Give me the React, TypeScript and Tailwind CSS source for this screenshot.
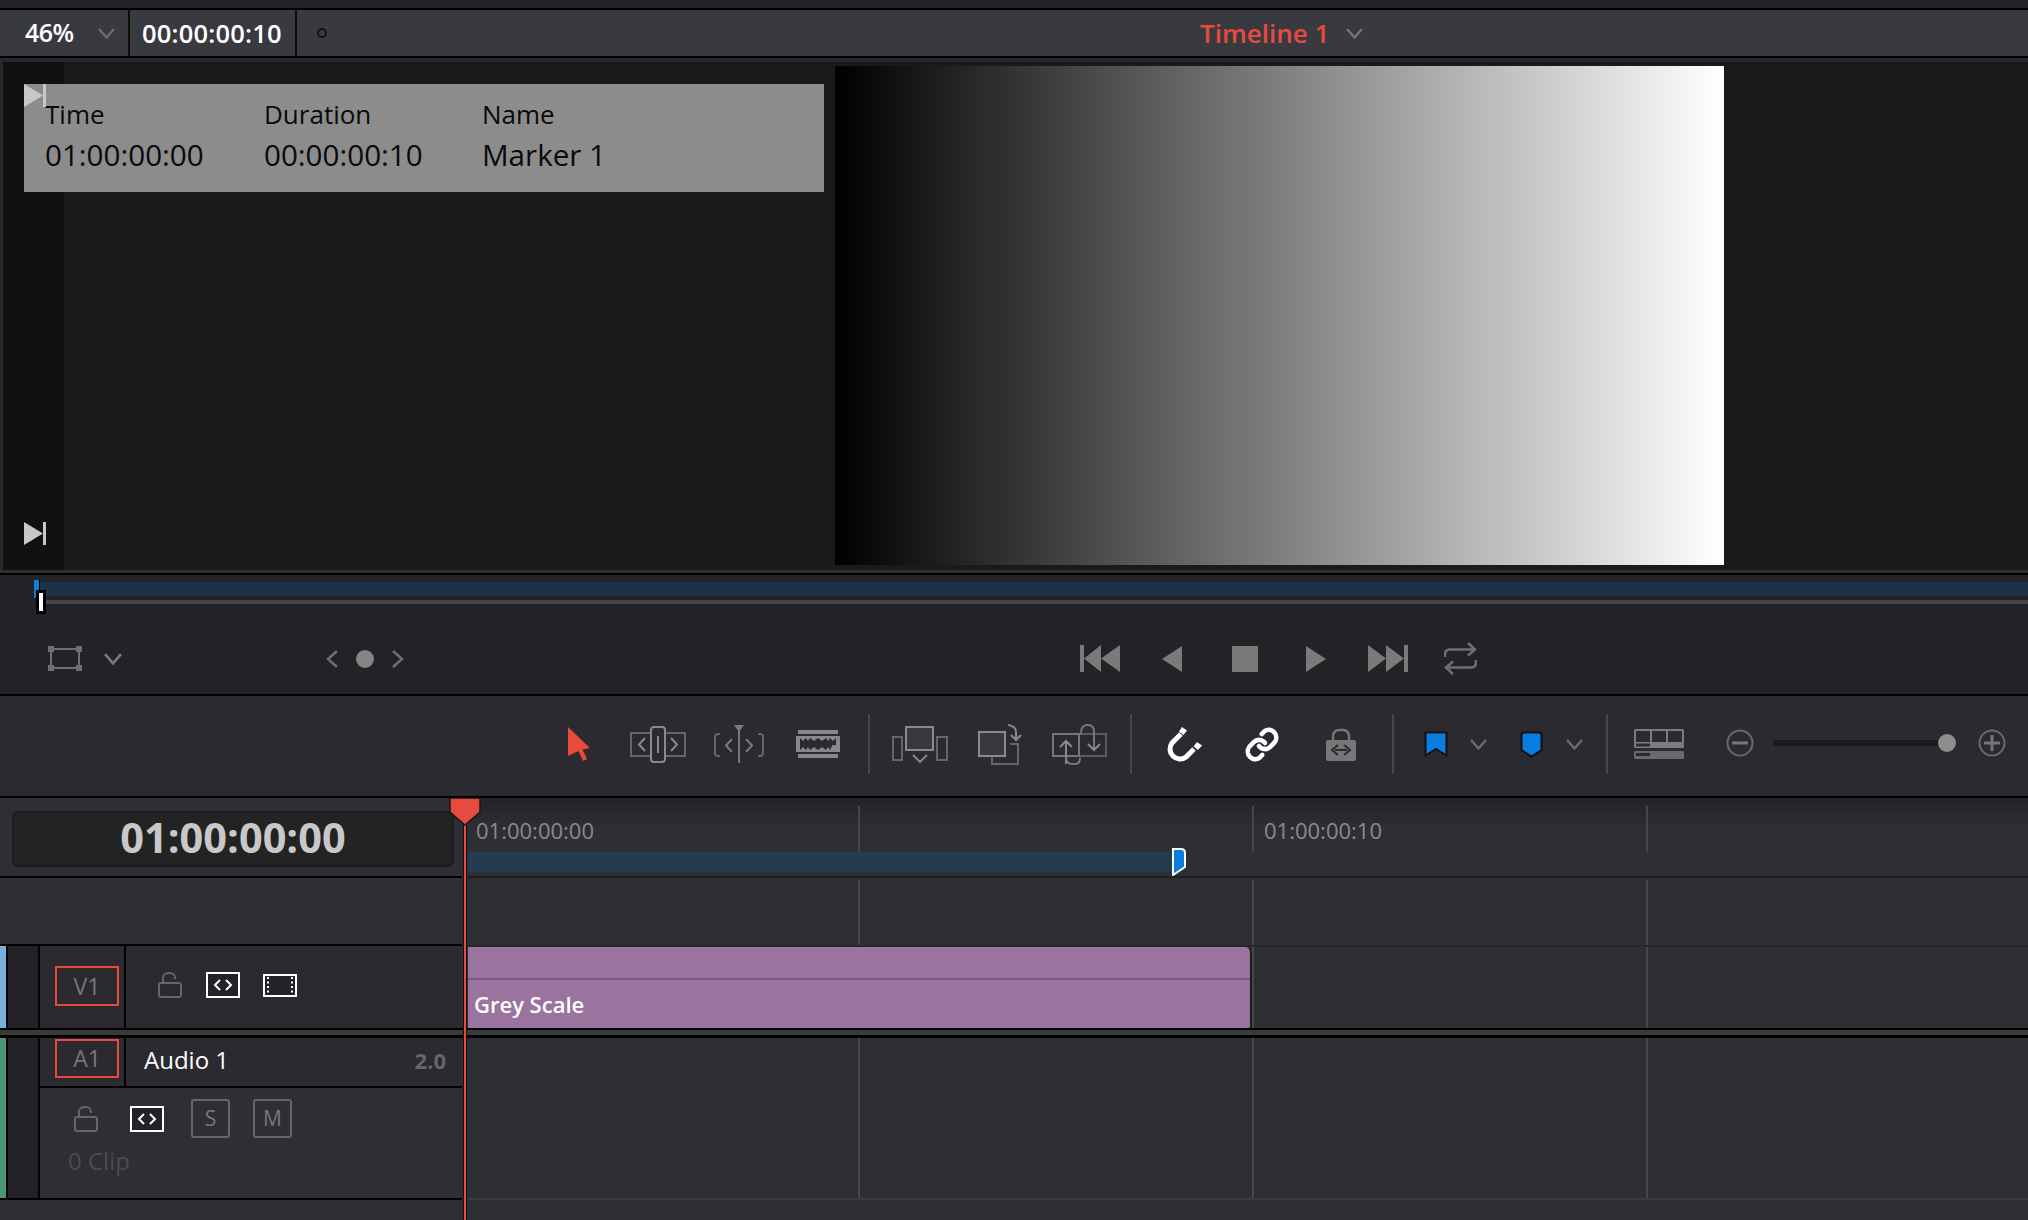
import React from 'react';

const gray = '#7a7a7a';

const Chevron = ({ w = 17, h = 11, c = '#6f6f6f', sw = 2.2 }: { w?: number; h?: number; c?: string; sw?: number }) => (
  <svg width={w} height={h} viewBox="0 0 17 11" fill="none" preserveAspectRatio="none">
    <path d="M1 1l7.5 8.5L16 1" stroke={c} strokeWidth={sw} />
  </svg>
);

const LockOpen = () => (
  <svg width="24" height="26" viewBox="0 0 24 26" fill="none" stroke="#666" strokeWidth="2">
    <rect x="1" y="11" width="22" height="14" rx="2" />
    <path d="M5 11V6a5 5 0 0 1 5-5h2a5 5 0 0 1 5 5v1" />
  </svg>
);

const AutoSelect = () => (
  <div className="w-[34px] h-[26px] border-2 border-white bg-[#232327] flex items-center justify-center">
    <svg width="20" height="12" viewBox="0 0 20 12" fill="none" stroke="#fff" strokeWidth="2">
      <path d="M7 1L2 6l5 5M13 1l5 5-5 5" />
    </svg>
  </div>
);

const Film = () => (
  <svg width="34" height="23" viewBox="0 0 34 23" fill="none">
    <rect x="1" y="1" width="32" height="21" fill="#232327" stroke="#fff" strokeWidth="2" />
    <path d="M5 3v17M29 3v17" stroke="#fff" strokeWidth="2" strokeDasharray="2 2.5" />
  </svg>
);

const TrimIcon = () => (
  <svg width="56" height="37" viewBox="0 0 56 37" fill="none" stroke="#666" strokeWidth="2">
    <path d="M20 7H1v23h19M36 7h19v23H36" />
    <rect x="21" y="1" width="14" height="35" rx="3" stroke="#8a8a8a" />
    <path d="M28 10v17" stroke="#8a8a8a" />
    <path d="M15 12l-6 6.500 6 6.500M41 12l6 6.500-6 6.500" stroke="#8a8a8a" />
  </svg>
);

const DynamicIcon = () => (
  <svg width="50" height="38" viewBox="0 0 50 38" fill="none" stroke="#666" strokeWidth="2">
    <path d="M6 9H4Q1 9 1 12v16q0 3 3 3h2M44 9h2q3 0 3 3v16q0 3-3 3h-2" />
    <path d="M25 6v32" stroke="#7a7a7a" />
    <path d="M20 0h10l-5 7z" fill="#7a7a7a" stroke="none" />
    <path d="M18 14l-6 6.500 6 6.500M32 14l6 6.500-6 6.500" stroke="#7a7a7a" />
  </svg>
);

const RazorIcon = () => (
  <svg width="44" height="28" viewBox="0 0 44 28" fill="none">
    <rect x="2" y="0" width="40" height="4" fill="#888" />
    <rect x="2" y="24" width="40" height="4" fill="#888" />
    <rect x="0" y="6" width="44" height="16" fill="#888" />
    <path d="M4 8l3 3 3-3 2 3 2-3 4 3 4-3 4 3 4-3 2 3 2-3 3 3 3-3v6l-3 0-3 6-2-3-2 3-4-3-4 3-4-3-4 3-2-3-2 3-3-3-3 3z" fill="#2a2a30" />
    <rect x="4" y="12.500" width="36" height="2.500" fill="#2a2a30" />
  </svg>
);

const InsertIcon = () => (
  <svg width="56" height="37" viewBox="0 0 56 37" fill="none" strokeWidth="2">
    <rect x="14" y="1" width="27" height="23" fill="#38383e" stroke="#8a8a8a" />
    <rect x="1" y="11" width="9" height="23" stroke="#666" />
    <rect x="45" y="11" width="10" height="23" stroke="#666" />
    <path d="M21 29l7 7 7-7" stroke="#8a8a8a" />
  </svg>
);

const OverwriteIcon = () => (
  <svg width="45" height="41" viewBox="0 0 45 41" fill="none" strokeWidth="2">
    <path d="M14 32v8h26V20h-8" stroke="#666" />
    <rect x="1" y="8" width="26" height="24" fill="#38383e" stroke="#8a8a8a" />
    <path d="M30 1q8 1 8 7v7M33 11l5 5 5-5" stroke="#8a8a8a" />
  </svg>
);

const ReplaceIcon = () => (
  <svg width="56" height="41" viewBox="0 0 56 41" fill="none" strokeWidth="2">
    <rect x="1" y="10" width="26" height="22" stroke="#777" />
    <path d="M28 10h26v22H28" stroke="#5c5c5c" />
    <path d="M14 40V17M8 23l6-6 6 6" stroke="#8a8a8a" />
    <path d="M14 33q0 7 7 7h2q5 0 5-6M42 26V8q0-7-6-7h-1q-6 0-6 9" stroke="#777" />
    <path d="M36 20l6 6 6-6" stroke="#8a8a8a" />
  </svg>
);

const MagnetIcon = () => (
  <svg width="36" height="36" viewBox="0 0 36 36" fill="none">
    <path d="M14 8L5 17a10 10 0 0 0 14 14l8-8" stroke="#fff" strokeWidth="5" strokeLinecap="butt" />
    <path d="M15 1l5 3.500-3.500 4.500-4.500-3.500zM30 16l5 3.500-4 4.500-4.500-3.500z" fill="#fff" />
  </svg>
);

const LinkIcon = () => (
  <svg width="36" height="37" viewBox="0 0 24 24" fill="none" stroke="#fff" strokeWidth="3" strokeLinecap="round" preserveAspectRatio="none">
    <path d="M10 13a5 5 0 0 0 7.500.5l3-3a5 5 0 0 0-7-7l-1.700 1.700" />
    <path d="M14 11a5 5 0 0 0-7.500-.5l-3 3a5 5 0 0 0 7 7l1.700-1.700" />
  </svg>
);

const PositionLock = () => (
  <svg width="30" height="34" viewBox="0 0 30 34" fill="none">
    <path d="M7 14V9a6 6 0 0 1 6-6h4a6 6 0 0 1 6 6v5" stroke="#777" strokeWidth="2.500" />
    <rect x="0" y="13" width="30" height="21" rx="2" fill="#777" />
    <path d="M9 23h12M12 18l-6 5 6 5M18 18l6 5-6 5" stroke="#2a2a30" strokeWidth="2" />
  </svg>
);

const FlagIcon = () => (
  <svg width="24" height="26" viewBox="0 0 24 26">
    <path d="M1.500 1.500h21v23L12 18 1.500 24.500z" fill="#0a7de0" stroke="#111" strokeWidth="2" />
  </svg>
);

const MarkerIcon = () => (
  <svg width="23" height="27" viewBox="0 0 23 27">
    <path d="M4 1.500h15q2.500 0 2.500 2.500v15L11.500 25.500 1.500 19V4q0-2.500 2.500-2.500z" fill="#0a7de0" stroke="#111" strokeWidth="2" />
  </svg>
);

const LayoutIcon = () => (
  <svg width="50" height="30" viewBox="0 0 50 30">
    <rect x="0" y="0" width="50" height="19" rx="1.500" fill="#7c7c7c" />
    <path d="M2 2h14v11H2zM18 2h14v11H18zM34 2h14v11H34z" fill="#2a2a30" />
    <rect x="2" y="14.500" width="14" height="3" fill="#2a2a30" />
    <rect x="0" y="22" width="50" height="8" rx="1.500" fill="#6a6a6a" />
    <rect x="2" y="24" width="14" height="3" fill="#2a2a30" />
  </svg>
);

const CircleSign = ({ plus }: { plus?: boolean }) => (
  <svg width="28" height="28" viewBox="0 0 28 28" fill="none" stroke="#6a6a6a">
    <circle cx="14" cy="14" r="12.500" strokeWidth="2" />
    <path d={plus ? 'M6 14h16M14 6v16' : 'M6 14h16'} stroke="#777" strokeWidth="3" />
  </svg>
);

const SkipMark = () => (
  <svg width="22" height="23" viewBox="0 0 22 23" fill="#c8c8c8">
    <path d="M0 0l19 11.500L0 23z" />
    <rect x="19" y="0" width="3" height="23" />
  </svg>
);

const Tick = ({ x, top, h }: { x: number; top: number; h: number }) => (
  <div className="absolute w-[2px] bg-[#45464b]" style={{ left: x, top, height: h }} />
);

export default function App() {
  return (
    <div className="w-[2028px] h-[1220px] overflow-hidden bg-[#222227] font-['Open_Sans',sans-serif] flex flex-col relative">
      <div className="h-[8px] bg-[#222227] border-b-0" />
      <div className="h-[2px] bg-black" />

      {/* viewer header */}
      <div className="h-[46px] bg-[#393a40] flex items-center relative">
        <div className="w-[130px] h-full border-r-2 border-[#0c0c0c] flex items-center pl-[25px]">
          <span className="text-[25px] font-semibold text-white tracking-[-0.5px]">46%</span>
          <span className="ml-[24px] flex"><Chevron /></span>
        </div>
        <div className="w-[167px] h-full border-r-2 border-[#0c0c0c] flex items-center pl-[12px]">
          <span className="text-[25.5px] font-semibold text-white tracking-[0.2px]">00:00:00:10</span>
        </div>
        <div className="ml-[20px] w-[10px] h-[10px] rounded-full border-2 border-[#111]" />
        <div className="absolute left-[1200px] top-0 h-full flex items-center">
          <span className="text-[26px] font-semibold text-[#e64b3d]">Timeline 1</span>
          <span className="ml-[17px] flex"><Chevron c="#777" /></span>
        </div>
      </div>
      <div className="h-[2px] bg-black" />
      <div className="h-[4px] bg-[#26262b]" />

      {/* viewer */}
      <div className="h-[508px] pl-[3px] bg-[#26262b] relative">
        <div className="h-full bg-[#1a1a1a] flex">
          <div className="w-[61px] h-full bg-[#111111] flex flex-col justify-end pl-[21px] pb-[25px]">
            <SkipMark />
          </div>
          <div className="w-[771px]" />
          <div className="w-[889px] mt-[4px] h-[499px] bg-[linear-gradient(90deg,#000,#fff)]" />
        </div>
        <div className="absolute left-[24px] top-[22px] w-[800px] h-[108px] bg-[#8c8c8c] flex pl-[21px] pt-[11px] text-[#0a0a0a]">
          <div className="absolute left-0 top-0"><SkipMark /></div>
          <div className="w-[219px]">
            <div className="text-[26px] leading-[38px]">Time</div>
            <div className="text-[29.6px] leading-[44px]">01:00:00:00</div>
          </div>
          <div className="w-[218px]">
            <div className="text-[26px] leading-[38px]">Duration</div>
            <div className="text-[29.6px] leading-[44px]">00:00:00:10</div>
          </div>
          <div>
            <div className="text-[26px] leading-[38px]">Name</div>
            <div className="text-[29.6px] leading-[44px]">Marker 1</div>
          </div>
        </div>
      </div>
      <div className="h-[3px] bg-[#2e2f35]" />
      <div className="h-[2px] bg-black" />

      {/* scrubber */}
      <div className="h-[119px] bg-[#222227] relative flex flex-col">
        <div className="mt-[7px] ml-[34px] h-[14px] bg-[#1b3248]" />
        <div className="mt-[4px] ml-[46px] h-[4px] bg-[#45464d]" />
        <div className="absolute left-[34px] top-[5px] w-[6px] h-[18px] bg-[#0a7de0] border-r border-black" />
        <div className="absolute left-[36px] top-[15px] w-[10px] h-[24px] bg-white border-[3px] border-black" />

        <div className="flex-1 flex items-center relative">
          <div className="flex items-center pl-[48px] pt-[19px] w-full">
            <svg width="34" height="25" viewBox="0 0 34 25" fill="none">
              <rect x="3" y="3" width="28" height="19" stroke="#6f6f6f" strokeWidth="2" />
              <path d="M0 0h6v6H0zM28 0h6v6h-6zM0 19h6v6H0zM28 19h6v6h-6z" fill="#6f6f6f" />
            </svg>
            <span className="ml-[22px] flex"><Chevron w={18} h={12} c="#7a7a7a" sw={2.500} /></span>
            <svg className="ml-[204px]" width="12" height="18" viewBox="0 0 12 18" fill="none" stroke="#6f6f6f" strokeWidth="2.500">
              <path d="M11 1L2 9l9 8" />
            </svg>
            <div className="ml-[18px] w-[18px] h-[18px] rounded-full bg-[#858585]" />
            <svg className="ml-[18px]" width="12" height="18" viewBox="0 0 12 18" fill="none" stroke="#6f6f6f" strokeWidth="2.500">
              <path d="M1 1l9 8-9 8" />
            </svg>
            <svg className="ml-[676px]" width="40" height="27" viewBox="0 0 40 27" fill={gray}>
              <rect width="4" height="27" />
              <path d="M4 13.500L21 0v27zM21 13.500L40 0v27z" />
            </svg>
            <svg className="ml-[42px]" width="20" height="26" viewBox="0 0 20 26" fill={gray}>
              <path d="M0 13L20 0v26z" />
            </svg>
            <div className="ml-[50px] w-[26px] h-[26px] bg-[#7a7a7a]" />
            <svg className="ml-[48px]" width="20" height="26" viewBox="0 0 20 26" fill={gray}>
              <path d="M20 13L0 0v26z" />
            </svg>
            <svg className="ml-[42px]" width="40" height="27" viewBox="0 0 40 27" fill={gray}>
              <rect x="36" width="4" height="27" />
              <path d="M18 13.500L0 0v27zM36 13.500L18 0v27z" />
            </svg>
            <svg className="ml-[36px]" width="33" height="33" viewBox="0 0 33 33" fill="none" stroke="#6f6f6f" strokeWidth="2.500">
              <path d="M24 1l7 6.500-7 6M31 7.500H6q-5 0-5 5V15M9 32l-7-6.500 7-6M2 25.500h25q5 0 5-5V18" />
            </svg>
          </div>
        </div>
      </div>
      <div className="h-[2px] bg-black" />

      {/* toolbar */}
      <div className="h-[100px] bg-[#2a2a30] flex items-center pb-[4px]">
        <svg className="ml-[567px]" width="24" height="34" viewBox="0 0 24 34" fill="#e64b3d">
          <path d="M1 0l22 21-7.500 1.500L20 32l-4 2-4.500-10L1 29z" />
        </svg>
        <span className="ml-[39px] flex"><TrimIcon /></span>
        <span className="ml-[28px] flex"><DynamicIcon /></span>
        <span className="ml-[32px] flex"><RazorIcon /></span>
        <div className="ml-[28px] w-[2px] h-[60px] bg-[#47474d]" />
        <span className="ml-[22px] flex"><InsertIcon /></span>
        <span className="ml-[30px] flex"><OverwriteIcon /></span>
        <span className="ml-[29px] flex"><ReplaceIcon /></span>
        <div className="ml-[22px] w-[2px] h-[60px] bg-[#47474d]" />
        <span className="ml-[35px] flex"><MagnetIcon /></span>
        <span className="ml-[41px] flex"><LinkIcon /></span>
        <span className="ml-[46px] flex"><PositionLock /></span>
        <div className="ml-[36px] w-[2px] h-[60px] bg-[#47474d]" />
        <span className="ml-[30px] flex"><FlagIcon /></span>
        <span className="ml-[22px] flex"><Chevron /></span>
        <span className="ml-[33px] flex"><MarkerIcon /></span>
        <span className="ml-[23px] flex"><Chevron /></span>
        <div className="ml-[23px] w-[2px] h-[60px] bg-[#47474d]" />
        <span className="ml-[26px] flex"><LayoutIcon /></span>
        <span className="ml-[42px] mt-[-3px] flex"><CircleSign /></span>
        <div className="ml-[19px] mt-[-3px] w-[171px] h-[6px] rounded-full bg-[#1a1a1a] relative">
          <div className="absolute right-[-12px] top-[-6px] w-[18px] h-[18px] rounded-full bg-[#8e8e8e]" />
        </div>
        <span className="ml-[34px] mt-[-3px] flex"><CircleSign plus /></span>
      </div>
      <div className="h-[2px] bg-black" />

      {/* timeline */}
      <div className="flex-1 grid grid-cols-[462px_1fr] relative">
        <div className="flex flex-col bg-[#2e2f35]">
          <div className="h-[78px] pl-[12px] pt-[13px]">
            <div className="h-[56px] w-[442px] rounded-[6px] border-2 border-[#1c1c1c] bg-[#232323] flex items-center justify-center pb-[2px]">
              <span className="text-[41.5px] font-bold text-[#c8c8c8] leading-none">01:00:00:00</span>
            </div>
          </div>
          <div className="h-[2px] bg-black" />
          <div className="h-[66px]" />
          <div className="h-[2px] bg-black" />

          {/* V1 */}
          <div className="h-[82px] bg-[#2a2a30] flex">
            <div className="w-[6px] bg-[#7aaedb]" />
            <div className="w-[32px] border-l-2 border-black bg-[#232327]" />
            <div className="w-[88px] border-l-2 border-r-2 border-black flex pt-[20px] pl-[15px]">
              <div className="w-[64px] h-[40px] border-2 border-[#e64b3d] flex items-center justify-center text-[23px] text-[#777]">V1</div>
            </div>
            <div className="flex items-start pt-[26px]">
              <span className="ml-[32px] flex"><LockOpen /></span>
              <span className="ml-[24px] flex"><AutoSelect /></span>
              <span className="ml-[23px] mt-[2px] flex"><Film /></span>
            </div>
          </div>
          <div className="h-[2px] bg-black" />
          <div className="h-[5px] bg-[#3a3a3a]" />
          <div className="h-[3px] bg-black" />

          {/* A1 */}
          <div className="flex h-[160px]">
            <div className="w-[6px] bg-[#4a9570]" />
            <div className="w-[32px] border-l-2 border-black bg-[#232327]" />
            <div className="flex-1 flex flex-col border-l-2 border-black">
              <div className="h-[48px] bg-[#2a2a30] flex">
                <div className="w-[86px] border-r-2 border-black pl-[15px] pt-[1px]">
                  <div className="w-[64px] h-[39px] border-2 border-[#e64b3d] flex items-center justify-center text-[23px] text-[#777]">A1</div>
                </div>
                <div className="flex-1 flex items-center justify-between pl-[18px] pr-[16px] pb-[4px]">
                  <span className="text-[24px] text-white">Audio 1</span>
                  <span className="text-[22px] font-bold text-[#666]">2.0</span>
                </div>
              </div>
              <div className="h-[2px] bg-black" />
              <div className="flex-1 bg-[#2e2f35] pl-[28px] pt-[11px]">
                <div className="flex items-center">
                  <span className="ml-[6px] flex"><LockOpen /></span>
                  <span className="ml-[32px] flex"><AutoSelect /></span>
                  <div className="ml-[27px] w-[39px] h-[39px] rounded-[3px] border-2 border-[#666] flex items-center justify-center text-[21px] text-[#777]">S</div>
                  <div className="ml-[23px] w-[39px] h-[39px] rounded-[3px] border-2 border-[#666] flex items-center justify-center text-[21px] text-[#777]">M</div>
                </div>
                <div className="mt-[6px] text-[24px] text-[#4a4b50] leading-[34px]">0 Clip</div>
              </div>
            </div>
          </div>
          <div className="h-[2px] bg-black" />
          <div className="flex-1" />
        </div>

        <div className="flex flex-col bg-[#2e2f33] pl-[6px] relative">
          {/* ruler */}
          <div className="h-[78px] bg-[linear-gradient(180deg,#232327,#2e2f33_40%)] relative">
            <div className="pt-[16px] pl-[8px] text-[22px] leading-[32px] text-[#8a8a8a]">01:00:00:00</div>
            <div className="absolute left-[796px] top-[16px] text-[22px] leading-[32px] text-[#8a8a8a]">01:00:00:10</div>
            <div className="absolute left-0 top-[54px] w-[704px] h-[20px] bg-[#253b50]" />
            <svg className="absolute left-[704px] top-[50px]" width="14" height="28" viewBox="0 0 14 28">
              <path d="M1 1h8q4 0 4 4v14l-12 8z" fill="#0a7de0" stroke="#fff" strokeWidth="2" />
            </svg>
          </div>
          <div className="h-[2px] bg-[#1f1f21]" />
          <div className="h-[67px]" />
          <div className="h-[2px] bg-[#25262a]" />
          {/* clip */}
          <div className="h-[81px] pr-0 relative">
            <div className="w-[784px] h-full bg-[#9b739f] rounded-tr-[6px] rounded-br-[3px] border-r-2 border-[#1c1c1c] relative">
              <div className="h-[33px] border-b-2 border-[#7a5a7f]" />
              <div className="pl-[6px] pt-[5px] text-[22px] font-semibold text-white leading-[38px]">Grey Scale</div>
            </div>
          </div>
          <div className="h-[2px] bg-black -ml-[6px]" />
          <div className="h-[5px] bg-[#3a3a3a] -ml-[6px]" />
          <div className="h-[3px] bg-black -ml-[6px]" />
          <div className="h-[160px]" />
          <div className="h-[2px] bg-[#3a3b40]" />
          <div className="flex-1 bg-[#2e2f33]" />

          {[858, 1252, 1646].map((x) => (
            <React.Fragment key={x}>
              <Tick x={x - 462} top={8} h={46} />
              <Tick x={x - 462} top={82} h={65} />
              <Tick x={x - 462} top={240} h={160} />
            </React.Fragment>
          ))}
          <Tick x={1252 - 462} top={149} h={81} />
          <Tick x={1646 - 462} top={149} h={81} />
        </div>

        {/* playhead */}
        <div className="absolute left-[463px] top-0 bottom-0 w-[4px] bg-[#111] flex justify-center">
          <div className="w-[2px] h-full bg-[#e64b3d]" />
        </div>
        <svg className="absolute left-[449px] top-0" width="32" height="28" viewBox="0 0 32 28">
          <path d="M1 0h30v14L16 27 1 14z" fill="#e64b3d" stroke="#1a1a1a" strokeWidth="1.500" />
        </svg>
      </div>
    </div>
  );
}
